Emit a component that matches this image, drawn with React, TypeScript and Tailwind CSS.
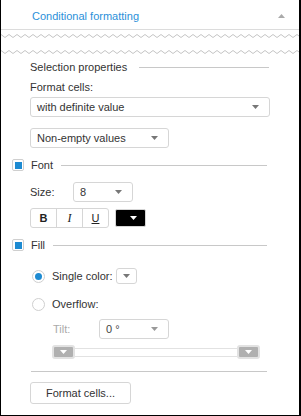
import React from 'react';

const Caret = ({ className = 'fill-[#777]' }: { className?: string }) => (
  <svg width="7" height="4" viewBox="0 0 7 4" className={className}>
    <path d="M0 0h7L3.5 4z" />
  </svg>
);

const Select = ({ label, className, muted }: { label: string; className: string; muted?: boolean }) => (
  <div className={`flex items-center justify-between rounded-[3px] border border-[#d6d6d6] bg-white pl-[6px] pr-[10px] ${className}`}>
    <span className={muted ? 'text-[#444]' : 'text-[#333]'}>{label}</span>
    <Caret className={muted ? 'fill-[#999]' : 'fill-[#777]'} />
  </div>
);

const Check = () => (
  <div className="flex h-[12px] w-[12px] items-center justify-center rounded-[2px] border border-[#cfcfcf] bg-white">
    <div className="h-[7px] w-[7px] bg-[#1e8bd2]" />
  </div>
);

const Radio = ({ on }: { on?: boolean }) => (
  <div className="flex h-[13px] w-[13px] items-center justify-center rounded-full border border-[#cfcfcf] bg-white">
    {on && <div className="h-[7px] w-[7px] rounded-full bg-[#1e8bd2]" />}
  </div>
);

const Zigzag = () => (
  <svg width="100%" height="4" className="block">
    <defs>
      <pattern id="zz" width="8" height="4" patternUnits="userSpaceOnUse">
        <polyline points="0,0.5 4,3.5 8,0.5" fill="none" stroke="#c4c4c4" strokeWidth="1" />
      </pattern>
    </defs>
    <rect width="100%" height="4" fill="url(#zz)" />
  </svg>
);

const Thumb = () => (
  <div className="flex h-[14px] w-[23px] items-center justify-center rounded-[3px] border-2 border-[#e2e2e2] bg-[#b0b0b0]">
    <Caret className="fill-white" />
  </div>
);

export default function App() {
  return (
    <div
      className="h-[416px] w-[301px] overflow-hidden border-b border-l border-r-2 border-black bg-white text-[11px] text-[#333]"
      style={{ fontFamily: '"Liberation Sans", Arial, sans-serif' }}
    >
      {/* header */}
      <div className="flex h-[30px] items-center justify-between border-b border-[#dcdcdc] pl-[31px] pr-[14px] pt-[3px]">
        <span className="text-[11px] text-[#2b90d9]">Conditional formatting</span>
        <Caret className="fill-[#aaa] rotate-180" />
      </div>

      <div className="mt-[4px] h-[4px]">
        <Zigzag />
      </div>
      <div className="mt-[12px] h-[4px]">
        <Zigzag />
      </div>

      <div className="pl-[29px] pr-[30px]">
        {/* selection properties */}
        <div className="mt-[5px] flex h-[16px] items-center gap-[12px]">
          <span>Selection properties</span>
          <div className="h-px flex-1 bg-[#c8c8c8]" />
        </div>
        <div className="mt-[4px] flex h-[16px] items-center">Format cells:</div>
        <Select label="with definite value" className="mt-[2px] h-[20px] w-[240px]" />
        <Select label="Non-empty values" className="mt-[11px] h-[20px] w-[139px]" />
      </div>

      {/* font */}
      <div className="mt-[11px] flex h-[12px] items-center pl-[11px] pr-[32px]">
        <Check />
        <span className="ml-[7px]">Font</span>
        <div className="ml-[8px] h-px flex-1 bg-[#c8c8c8]" />
      </div>
      <div className="pl-[29px]">
        <div className="mt-[11px] flex h-[20px] items-center">
          <span className="w-[43px]">Size:</span>
          <Select label="8" className="h-[20px] w-[60px] pl-[5px]" />
        </div>
        <div className="mt-[6px] flex h-[20px] items-center">
          <div className="flex h-[20px] rounded-[3px] border border-[#d6d6d6]">
            <div className="flex w-[26px] items-center justify-center border-r border-[#d6d6d6] font-bold text-[#222]">B</div>
            <div className="flex w-[26px] items-center justify-center border-r border-[#d6d6d6] text-[12px] italic text-[#222]" style={{ fontFamily: '"Liberation Serif", serif' }}>I</div>
            <div className="flex w-[25px] items-center justify-center text-[#222] underline">U</div>
          </div>
          <div className="ml-[6px] flex h-[18px] w-[31px] items-center justify-end rounded-[2px] border border-[#d6d6d6] bg-black pr-[8px]">
            <Caret className="fill-white" />
          </div>
        </div>
      </div>

      {/* fill */}
      <div className="mt-[11px] flex h-[12px] items-center pl-[11px] pr-[32px]">
        <Check />
        <span className="ml-[7px]">Fill</span>
        <div className="ml-[8px] h-px flex-1 bg-[#c8c8c8]" />
      </div>
      <div className="pl-[31px]">
        <div className="mt-[17px] flex h-[16px] items-center">
          <Radio on />
          <span className="ml-[7px]">Single color:</span>
          <div className="ml-[3px] flex h-[16px] w-[21px] items-center justify-center rounded-[3px] border border-[#d6d6d6]">
            <Caret />
          </div>
        </div>
        <div className="mt-[12px] flex h-[16px] items-center">
          <Radio />
          <span className="ml-[7px]">Overflow:</span>
        </div>
        <div className="mt-[7px] flex h-[20px] items-center pl-[21px]">
          <span className="w-[46px] text-[#aaa]">Tilt:</span>
          <Select label="0 °" muted className="h-[20px] w-[70px] pl-[4px]" />
        </div>
        <div className="mt-[6px] flex h-[14px] items-center pl-[20px]">
          <Thumb />
          <div className="h-[9px] w-[162px] border-y border-[#e2e2e2] bg-white" />
          <Thumb />
        </div>
      </div>

      <div className="ml-[30px] mr-[32px] mt-[12px] h-px bg-[#c8c8c8]" />

      <div className="ml-[29px] mt-[10px] flex h-[22px] w-[101px] items-center justify-center rounded-[3px] border border-[#d6d6d6] text-[#333]">
        Format cells...
      </div>
    </div>
  );
}
